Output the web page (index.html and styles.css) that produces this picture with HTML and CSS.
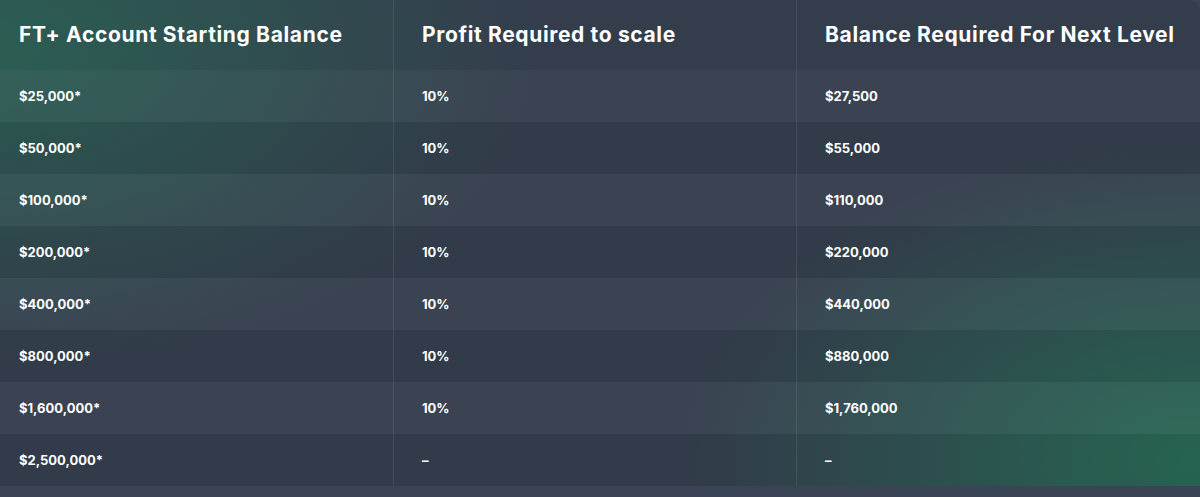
FILE: index.html
```html
<!DOCTYPE html>
<html>
<head>
<meta charset="utf-8">
<link rel="stylesheet" href="styles.css">
</head>
<body>
<div class="scale-table">
  <div class="cell head c1">FT+ Account Starting Balance</div>
  <div class="cell head c2">Profit Required to scale</div>
  <div class="cell head c3">Balance Required For Next Level</div>

  <div class="cell odd c1">$25,000*</div><div class="cell odd c2">10%</div><div class="cell odd c3">$27,500</div>
  <div class="cell even c1">$50,000*</div><div class="cell even c2">10%</div><div class="cell even c3">$55,000</div>
  <div class="cell odd c1">$100,000*</div><div class="cell odd c2">10%</div><div class="cell odd c3">$110,000</div>
  <div class="cell even c1">$200,000*</div><div class="cell even c2">10%</div><div class="cell even c3">$220,000</div>
  <div class="cell odd c1">$400,000*</div><div class="cell odd c2">10%</div><div class="cell odd c3">$440,000</div>
  <div class="cell even c1">$800,000*</div><div class="cell even c2">10%</div><div class="cell even c3">$880,000</div>
  <div class="cell odd c1">$1,600,000*</div><div class="cell odd c2">10%</div><div class="cell odd c3">$1,760,000</div>
  <div class="cell even c1">$2,500,000*</div><div class="cell even c2">–</div><div class="cell even c3">–</div>
</div>
</body>
</html>
```
FILE: styles.css
```css
html, body {
  margin: 0;
  padding: 0;
}
body {
  background: #3a4454;
  width: 1200px;
  height: 497px;
  overflow: hidden;
  font-family: "Inter", "Open Sans", sans-serif;
  color: #ffffff;
}
.scale-table {
  display: grid;
  grid-template-columns: 393px 403px 1fr;
  grid-template-rows: 70px repeat(8, 52px);
  height: 486px;
  border-radius: 0 12px 0 0;
  background:
    radial-gradient(ellipse 540px 320px at 0% 10%, rgba(40, 105, 85, 0.75), rgba(40, 105, 85, 0) 100%),
    radial-gradient(ellipse 520px 320px at 100% 95%, rgba(38, 112, 86, 0.85), rgba(38, 112, 86, 0) 100%),
    #343d4c;
}
.cell {
  display: flex;
  align-items: center;
  font-size: 13px;
  font-weight: 700;
}
.c1 { padding-left: 19px; }
.c2, .c3 {
  padding-left: 28px;
  border-left: 1px solid rgba(255, 255, 255, 0.09);
}
.head {
  font-size: 21px;
  font-weight: 700;
  letter-spacing: 0.65px;
  padding-bottom: 1px;
}
.odd { background: rgba(255, 255, 255, 0.035); }
.even { background: rgba(0, 0, 0, 0.03); }
```
